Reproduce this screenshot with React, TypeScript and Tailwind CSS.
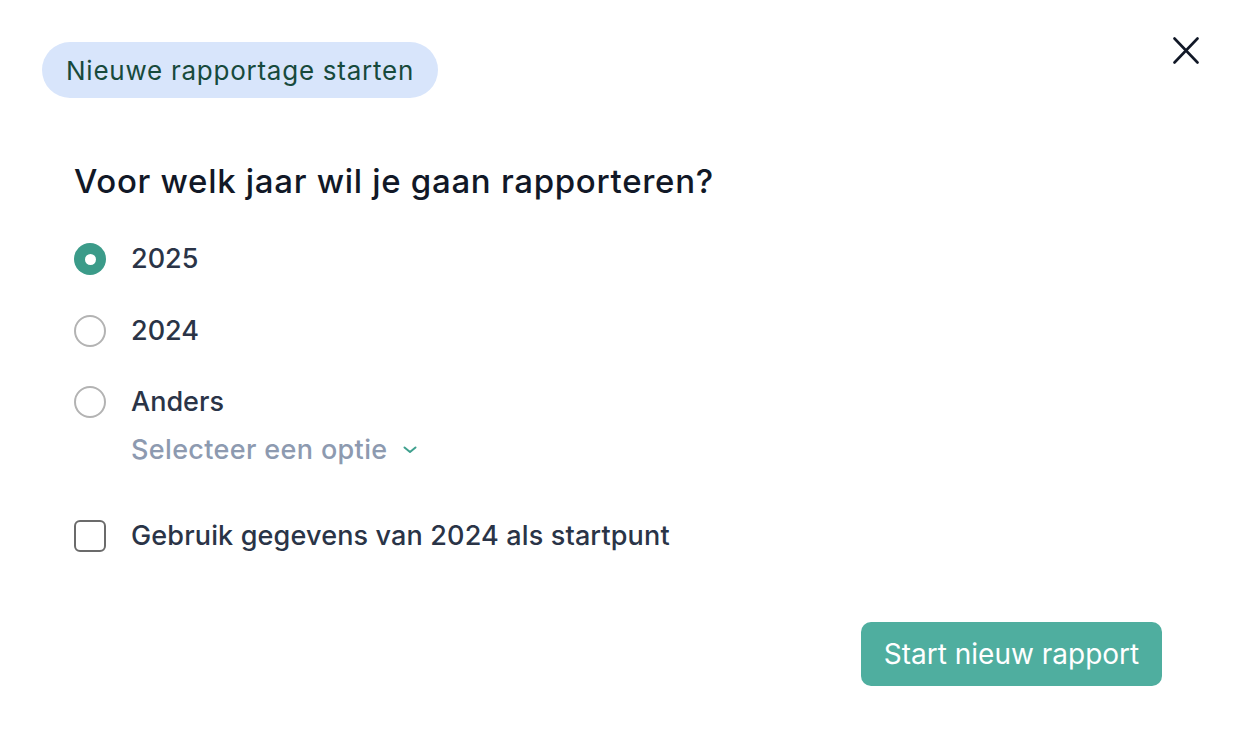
import React from "react";

export default function App() {
  const font = { fontFamily: "Inter, 'Noto Sans', sans-serif" };
  return (
    <div className="w-[1236px] h-[740px] bg-white relative" style={font}>
      <div className="pt-[42px] pl-[42px] pr-[37px] flex items-start justify-between">
        <div className="h-[56px] px-[24px] flex items-center rounded-[28px] bg-[#d8e5fb] text-[#174a3c] text-[26px] tracking-[0.75px]">
          Nieuwe rapportage starten
        </div>
        <button className="mt-[-5px] w-[26px] h-[27px] flex items-center justify-center text-[#111827]">
          <svg width="26" height="27" viewBox="0 0 26 27" fill="none" stroke="currentColor" strokeWidth="2.6" strokeLinecap="round">
            <path d="M1.5 1.5L24.5 25.5M24.5 1.5L1.5 25.5" />
          </svg>
        </button>
      </div>
      <div className="pl-[74px]">
        <h2 className="mt-[63px] text-[33px] leading-[40px] font-medium text-[#111827] tracking-[0.7px]">
          Voor welk jaar wil je gaan rapporteren?
        </h2>
        <div className="mt-[42px] flex flex-col gap-[39.5px]">
          <label className="flex items-center gap-[25px] h-[32px]">
            <span className="w-[32px] h-[32px] rounded-full bg-[#3b9b89] flex items-center justify-center">
              <span className="w-[11px] h-[11px] rounded-full bg-white" />
            </span>
            <span className="text-[27px] leading-[32px] font-medium text-[#2a3447]">2025</span>
          </label>
          <label className="flex items-center gap-[25px] h-[32px]">
            <span className="w-[32px] h-[32px] rounded-full border-2 border-[#b3b3b3]" />
            <span className="text-[27px] leading-[32px] font-medium text-[#2a3447]">2024</span>
          </label>
          <label className="flex items-center gap-[25px] h-[32px]">
            <span className="w-[32px] h-[32px] rounded-full border-2 border-[#b3b3b3]" />
            <span className="text-[27px] leading-[32px] font-medium text-[#2a3447]">Anders</span>
          </label>
        </div>
        <div className="mt-[16px] ml-[57px] h-[32px] flex items-center gap-[15px] text-[27px] leading-[32px] font-medium text-[#8d9ab0] tracking-[0.35px]">
          <span>Selecteer een optie</span>
          <svg width="14" height="8" viewBox="0 0 14 8" fill="none" stroke="#3fa08e" strokeWidth="2" strokeLinecap="round" strokeLinejoin="round">
            <path d="M1.5 1.5L7 6L12.5 1.5" />
          </svg>
        </div>
        <label className="mt-[54px] h-[32px] flex items-center gap-[25px]">
          <span className="w-[32px] h-[32px] rounded-[6px] border-2 border-[#6b6b6b]" />
          <span className="text-[27px] leading-[32px] font-medium text-[#2a3447] tracking-[0.15px]">Gebruik gegevens van 2024 als startpunt</span>
        </label>
      </div>
      <div className="mt-[70px] pr-[74px] flex justify-end">
        <button className="w-[301px] h-[64px] rounded-[10px] bg-[#4fae9f] text-white text-[28px]">
          Start nieuw rapport
        </button>
      </div>
    </div>
  );
}
